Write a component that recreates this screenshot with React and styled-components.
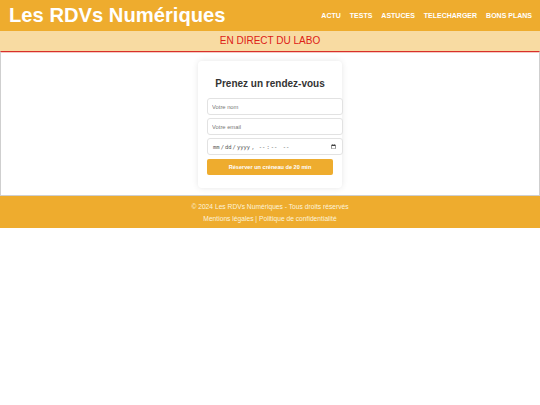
import React from 'react'
import styled, { createGlobalStyle } from 'styled-components'

const GlobalStyle = createGlobalStyle`
  body {
    margin: 0;
    background: #fff;
    font-family: 'Liberation Sans', Arial, sans-serif;
  }
`

const links = ['Actu', 'Tests', 'Astuces', 'Telecharger', 'Bons plans']

const App = () => {
  return (
    <>
      <GlobalStyle />
      <Header>
        <Logo>Les RDVs Numériques</Logo>
        <Nav>
          {links.map((l) => (
            <NavLink key={l} href='#'>
              {l}
            </NavLink>
          ))}
        </Nav>
      </Header>
      <Banner>EN DIRECT DU LABO</Banner>
      <Main>
        <Card>
          <Title>Prenez un rendez-vous</Title>
          <Field type='text' placeholder='Votre nom' />
          <Field type='email' placeholder='Votre email' />
          <Field type='datetime-local' />
          <Button>Réserver un créneau de 20 min</Button>
        </Card>
      </Main>
      <Footer>
        <p>© 2024 Les RDVs Numériques - Tous droits réservés</p>
        <p>Mentions légales | Politique de confidentialité</p>
      </Footer>
    </>
  )
}

export default App

const Header = styled.header`
  height: 31px;
  background: #eeac2e;
  display: flex;
  align-items: center;
  justify-content: space-between;
  padding: 0 8px 0 9px;
`

const Logo = styled.h1`
  margin: 0;
  font-size: 20.2px;
  font-weight: 700;
  color: #fff;
`

const Nav = styled.nav`
  display: flex;
  gap: 9px;
`

const NavLink = styled.a`
  color: #fff;
  font-size: 7px;
  font-weight: 700;
  text-transform: uppercase;
  text-decoration: none;
`

const Banner = styled.div`
  height: 20px;
  line-height: 20px;
  background: #f8dba2;
  color: #dd2016;
  text-align: center;
  font-size: 10px;
`

const Main = styled.main`
  border: 1px solid #cfcfcf;
  border-top: 1px solid #d8302a;
  box-shadow: inset 0 1px 0 #f6c9c4;
  padding: 9px 0 7px;
  display: flex;
  justify-content: center;
`

const Card = styled.section`
  width: 126px;
  padding: 9px 9px 13px;
  background: #fff;
  border-radius: 4px;
  box-shadow: 0 0 6px rgba(0, 0, 0, 0.1);
  display: flex;
  flex-direction: column;
  gap: 3px;
`

const Title = styled.h2`
  margin: 8px 0 6px;
  font-size: 10px;
  font-weight: 700;
  color: #333;
  text-align: center;
`

const Field = styled.input`
  width: 100%;
  height: 15px;
  padding: 0 4px;
  border: 1px solid #e2e2e2;
  border-radius: 3px;
  font-family: 'Liberation Sans', Arial, sans-serif;
  font-size: 5.8px;
  color: #555;
  &::placeholder {
    color: #777;
  }
  &[type='datetime-local'] {
    font-family: 'DejaVu Sans Mono', monospace;
    font-size: 5.5px;
  }
`

const Button = styled.button`
  margin-top: 1px;
  height: 16px;
  border: none;
  border-radius: 2px;
  background: #eeac2e;
  color: #fff;
  font-family: 'Liberation Sans', Arial, sans-serif;
  font-size: 5.6px;
  font-weight: 700;
`

const Footer = styled.footer`
  height: 32px;
  background: #eeac2e;
  color: #fdf3dc;
  text-align: center;
  font-size: 6.7px;
  display: flex;
  flex-direction: column;
  justify-content: center;
  gap: 5px;
  p {
    margin: 0;
  }
`
